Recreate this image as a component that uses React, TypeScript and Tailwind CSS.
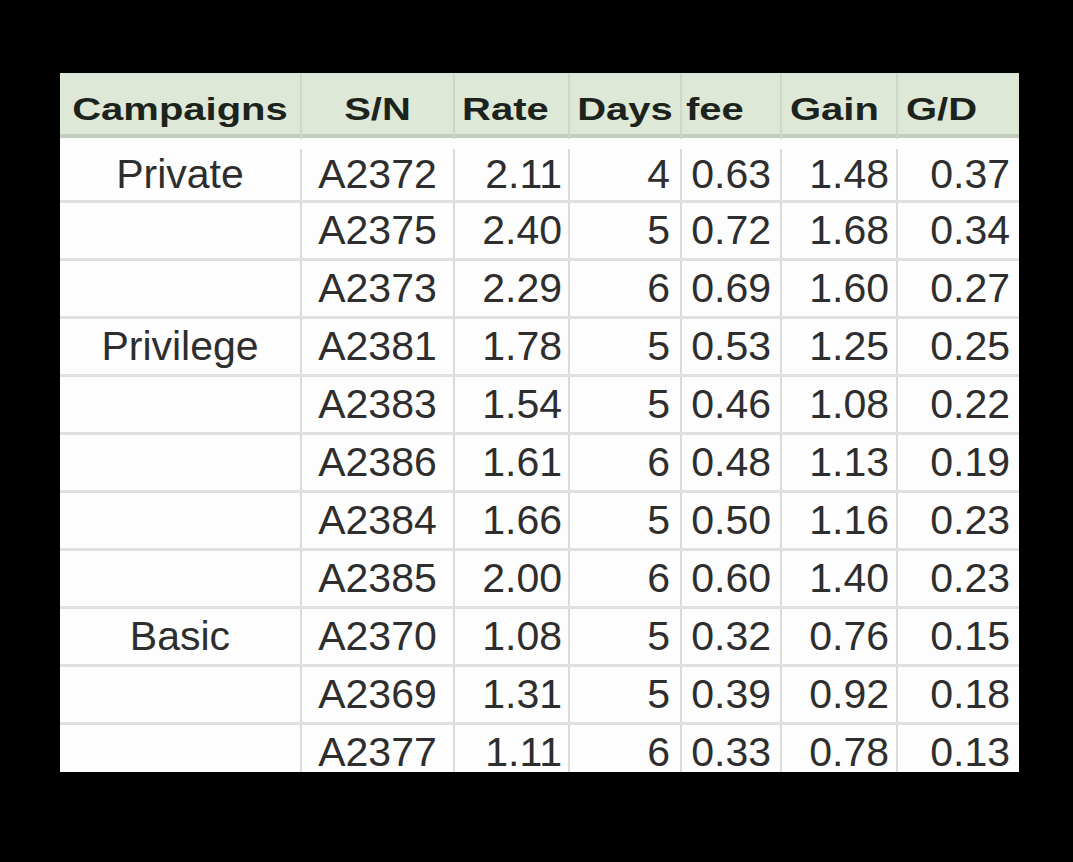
import React from "react";

const rows: [string, string, string, string, string, string, string][] = [
  ["Private", "A2372", "2.11", "4", "0.63", "1.48", "0.37"],
  ["", "A2375", "2.40", "5", "0.72", "1.68", "0.34"],
  ["", "A2373", "2.29", "6", "0.69", "1.60", "0.27"],
  ["Privilege", "A2381", "1.78", "5", "0.53", "1.25", "0.25"],
  ["", "A2383", "1.54", "5", "0.46", "1.08", "0.22"],
  ["", "A2386", "1.61", "6", "0.48", "1.13", "0.19"],
  ["", "A2384", "1.66", "5", "0.50", "1.16", "0.23"],
  ["", "A2385", "2.00", "6", "0.60", "1.40", "0.23"],
  ["Basic", "A2370", "1.08", "5", "0.32", "0.76", "0.15"],
  ["", "A2369", "1.31", "5", "0.39", "0.92", "0.18"],
  ["", "A2377", "1.11", "6", "0.33", "0.78", "0.13"],
];

const grid = "grid grid-cols-[242px_153px_115px_112px_100px_116px_121px]";
const vline = "border-r-2 border-[#dadada]";

export default function App() {
  return (
    <div className="w-[1073px] h-[862px] bg-black pt-[73px] pl-[60px]" style={{ fontFamily: '"Liberation Sans", Arial, sans-serif' }}>
      <div className="w-[959px] h-[699px] overflow-hidden bg-[#fdfdfd]">
        <div className={`${grid} h-[65px] bg-[#dde8d7] border-b-4 border-[#c3cdbf] text-[40px] font-bold text-[#1c231c]`}>
          <div className="border-r-2 border-[#cdd8c9] flex items-center justify-center pt-[6px]"><span className="scale-y-[0.8] inline-block">Campaigns</span></div>
          <div className="border-r-2 border-[#cdd8c9] flex items-center justify-center pt-[6px]"><span className="scale-y-[0.8] inline-block">S/N</span></div>
          <div className="border-r-2 border-[#cdd8c9] flex items-center pl-[7px] pt-[6px]"><span className="scale-y-[0.8] inline-block">Rate</span></div>
          <div className="border-r-2 border-[#cdd8c9] flex items-center justify-center pt-[6px]"><span className="scale-y-[0.8] inline-block">Days</span></div>
          <div className="border-r-2 border-[#cdd8c9] flex items-center pl-[4px] pt-[6px]"><span className="scale-y-[0.8] inline-block">fee</span></div>
          <div className="border-r-2 border-[#cdd8c9] flex items-center pl-[8px] pt-[6px]"><span className="scale-y-[0.8] inline-block">Gain</span></div>
          <div className="flex items-center pl-[8px] pt-[6px]"><span className="scale-y-[0.8] inline-block">G/D</span></div>
        </div>
        {rows.map((r, i) => (
          <div
            key={i}
            className={`${grid} ${i === 0 ? "h-[65px] pt-[11px]" : "h-[58px]"} border-b-[3px] border-[#e0e0e0] text-[41px] text-[#2e2e2e] leading-none`}
          >
            <div className={`${vline} flex items-center justify-center`}>{r[0]}</div>
            <div className={`${vline} flex items-center justify-center`}>{r[1]}</div>
            <div className={`${vline} flex items-center justify-end pr-[6px]`}>{r[2]}</div>
            <div className={`${vline} flex items-center justify-end pr-[10px]`}>{r[3]}</div>
            <div className={`${vline} flex items-center justify-end pr-[9px]`}>{r[4]}</div>
            <div className={`${vline} flex items-center justify-end pr-[7px]`}>{r[5]}</div>
            <div className="flex items-center justify-end pr-[9px]">{r[6]}</div>
          </div>
        ))}
      </div>
    </div>
  );
}
